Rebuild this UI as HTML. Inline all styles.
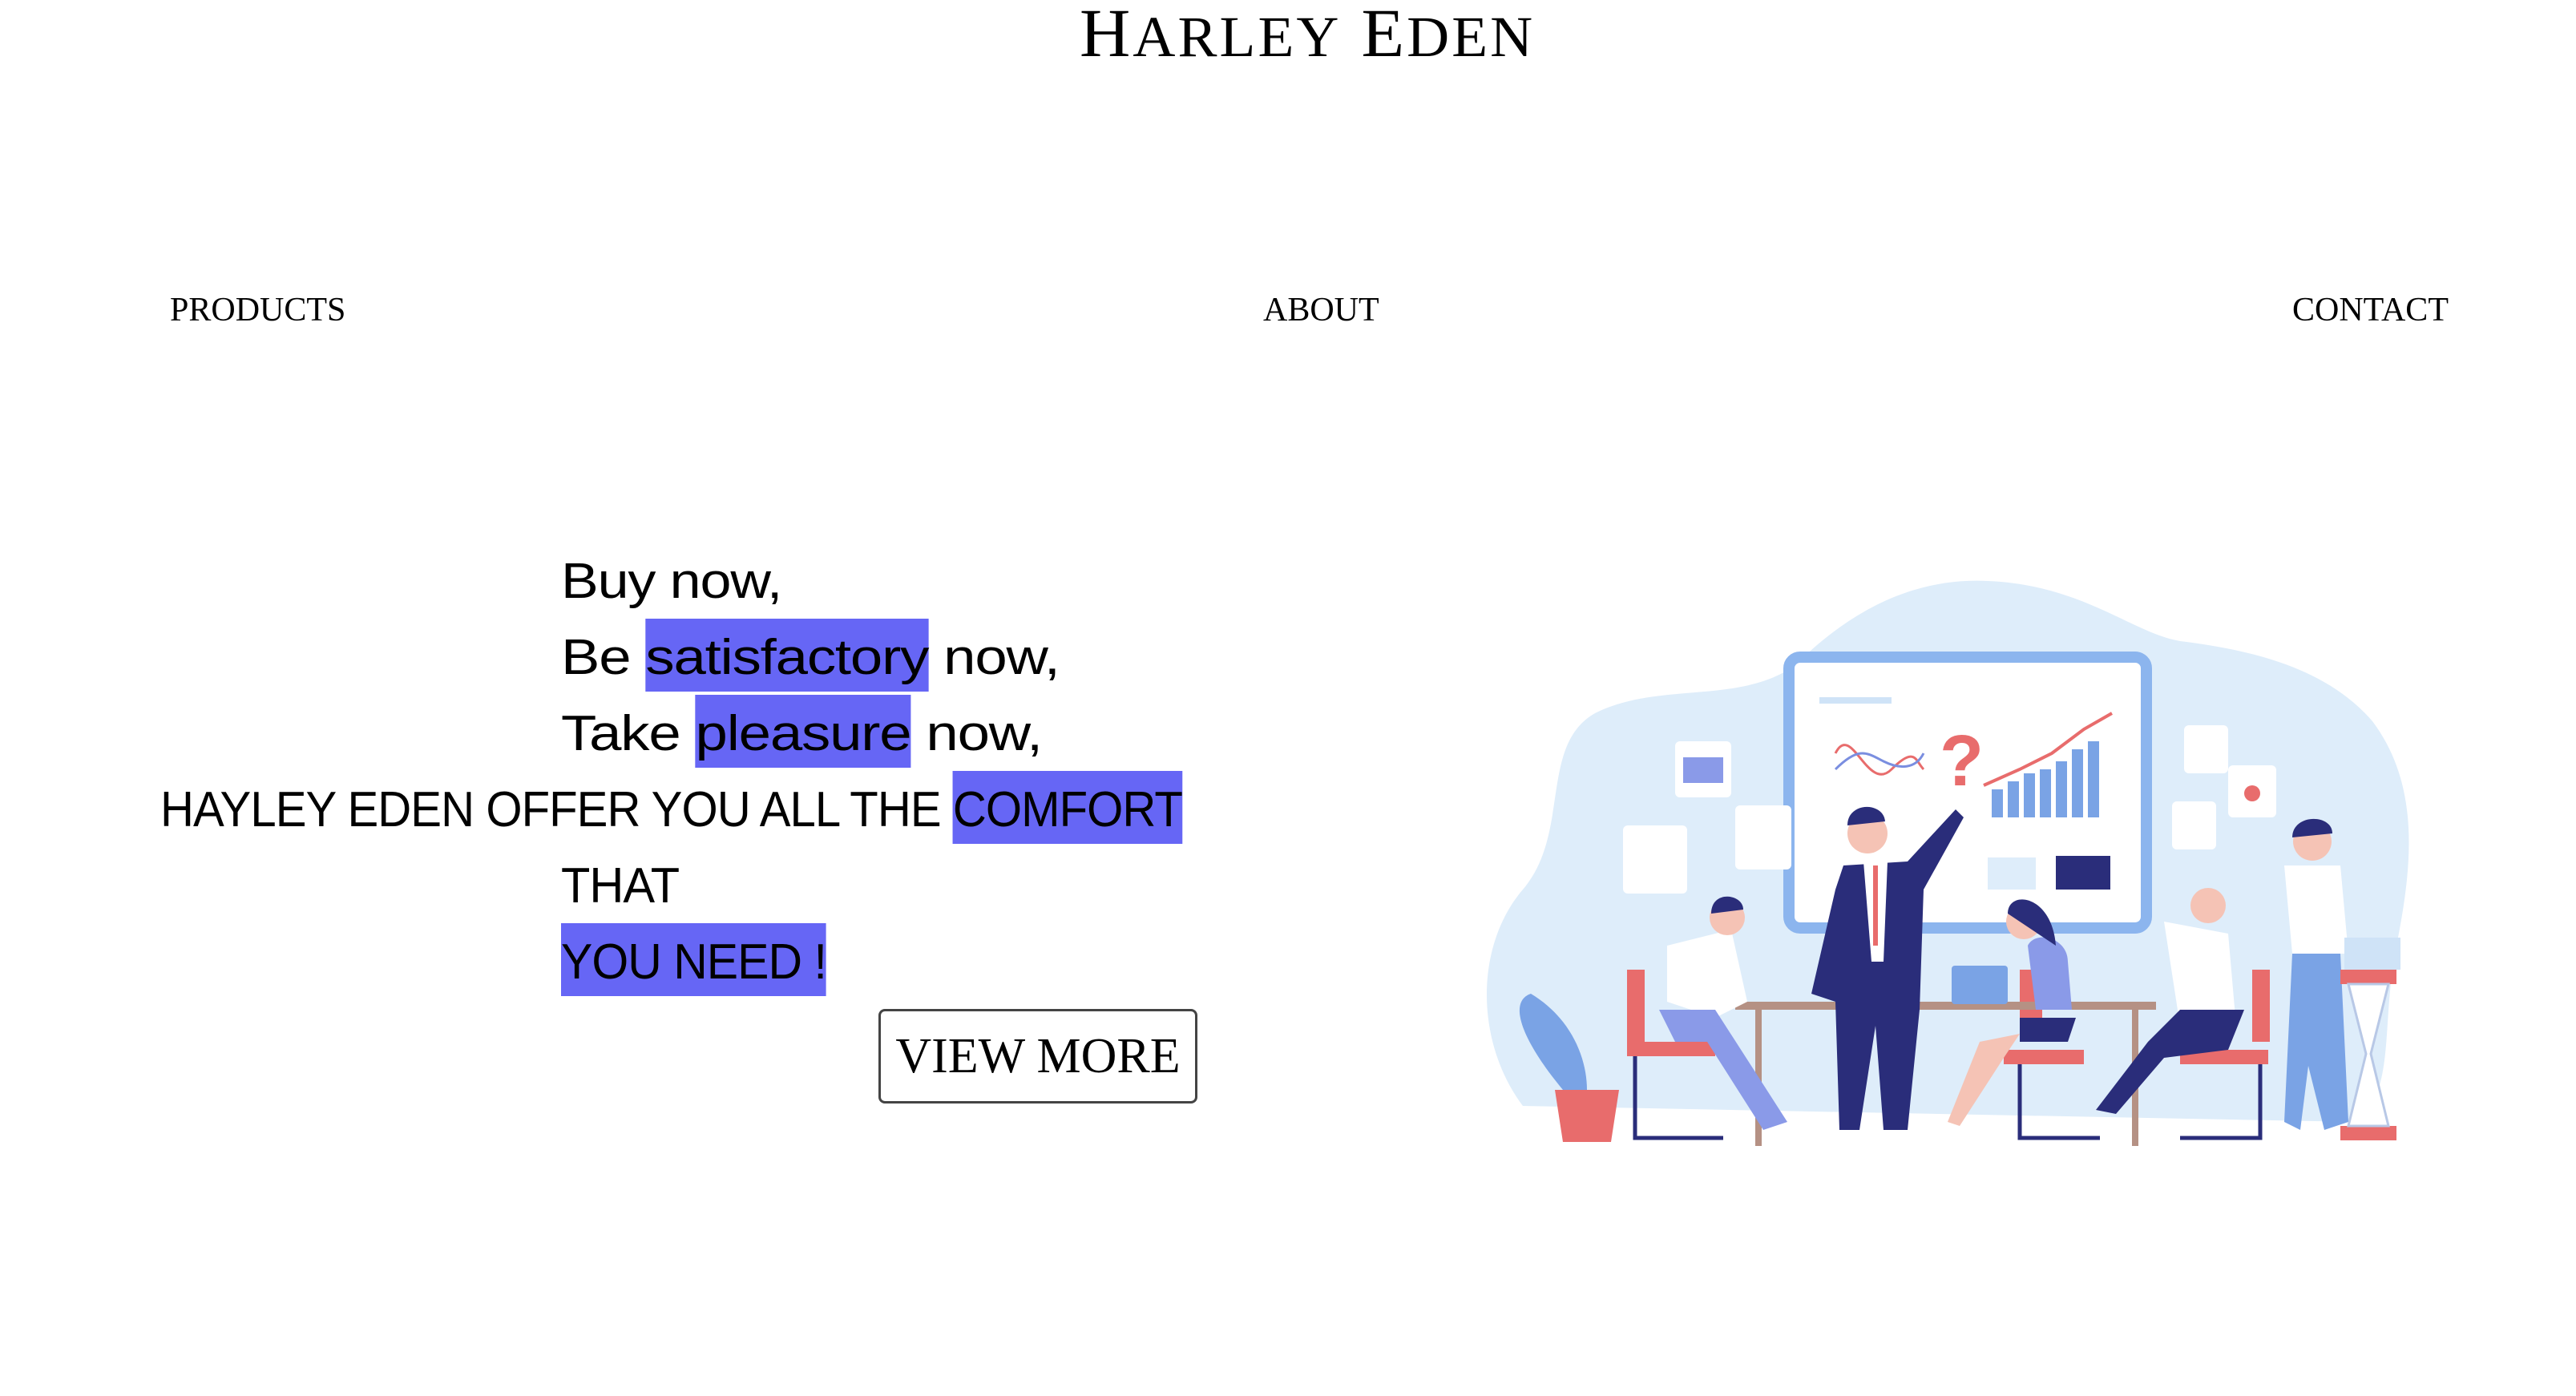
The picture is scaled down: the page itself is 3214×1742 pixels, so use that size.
<!DOCTYPE html>
<html><head><meta charset="utf-8"><style>
html,body{margin:0;padding:0;background:#fff;}
body{width:3214px;height:1742px;position:relative;overflow:hidden;font-family:"Liberation Sans",sans-serif;color:#000;}
.title{position:absolute;top:-4px;left:1347px;font-family:"Liberation Serif",serif;font-size:86px;letter-spacing:3px;line-height:90px;white-space:nowrap;transform:scaleX(1.02);transform-origin:left;}
.title small{font-size:72px;}
.nav{position:absolute;top:362px;font-family:"Liberation Serif",serif;font-size:42px;line-height:50px;}
.l{position:absolute;font-size:62px;line-height:88px;white-space:nowrap;letter-spacing:-1px;transform-origin:left;}
.h{background:#6666f5;padding:14px 0 8px;}
.btn{position:absolute;left:1096px;top:1259px;width:392px;height:112px;border:3px solid #444;border-radius:8px;font-family:"Liberation Serif",serif;font-size:62px;line-height:112px;text-align:center;}
svg{position:absolute;left:0;top:0;}
</style></head><body>
<div class="title">H<small>ARLEY</small> E<small>DEN</small></div>
<div class="nav" style="left:212px">PRODUCTS</div>
<div class="nav" style="left:1576px">ABOUT</div>
<div class="nav" style="left:2860px">CONTACT</div>

<div class="l" style="left:700px;top:682px;transform:scaleX(1.13)">Buy now,</div>
<div class="l" style="left:700px;top:777px;transform:scaleX(1.17)">Be <span class="h">satisfactory</span> now,</div>
<div class="l" style="left:700px;top:872px;transform:scaleX(1.17)">Take <span class="h">pleasure</span> now,</div>
<div class="l" style="left:200px;top:967px;transform:scaleX(0.937)">HAYLEY EDEN OFFER YOU ALL THE <span class="h">COMFORT</span></div>
<div class="l" style="left:700px;top:1062px;transform:scaleX(0.96)">THAT</div>
<div class="l" style="left:700px;top:1157px;transform:scaleX(0.95)"><span class="h">YOU NEED !</span></div>
<div class="btn">VIEW MORE</div>

<svg width="3214" height="1742" viewBox="0 0 3214 1742">
<path d="M1900 1380 C1840 1300 1840 1180 1900 1110 C1960 1040 1920 930 1990 890 C2070 850 2170 880 2240 830 C2300 770 2380 720 2480 725 C2600 730 2660 790 2720 800 C2800 810 2900 830 2960 900 C3020 980 3010 1080 2990 1180 C2970 1280 2990 1360 2940 1400 Z" fill="#deedfa"/>
<rect x="2232" y="820" width="446" height="338" rx="14" fill="#fff" stroke="#8cb5ee" stroke-width="14"/>
<rect x="2270" y="870" width="90" height="8" fill="#cfe3f7"/>
<path d="M2290 940 C2310 900 2330 990 2360 960 S2390 950 2400 960" stroke="#e86c6c" stroke-width="3" fill="none"/>
<path d="M2290 960 C2320 930 2330 940 2350 950 S2390 960 2400 940" stroke="#7a8ee0" stroke-width="3" fill="none"/>
<text x="2420" y="980" font-family="Liberation Sans,sans-serif" font-size="90" font-weight="bold" fill="#e86c6c">?</text>
<g fill="#7aa3e5"><rect x="2485" y="985" width="14" height="35"/><rect x="2505" y="975" width="14" height="45"/><rect x="2525" y="965" width="14" height="55"/><rect x="2545" y="960" width="14" height="60"/><rect x="2565" y="950" width="14" height="70"/><rect x="2585" y="935" width="14" height="85"/><rect x="2605" y="925" width="14" height="95"/></g>
<path d="M2475 980 L2520 960 L2560 940 L2600 910 L2635 890" stroke="#e86c6c" stroke-width="4" fill="none"/>
<rect x="2480" y="1070" width="60" height="40" fill="#deedfa"/>
<rect x="2565" y="1068" width="68" height="42" fill="#2a2d7a"/>
<rect x="2090" y="925" width="70" height="70" rx="6" fill="#fff"/><rect x="2100" y="945" width="50" height="32" fill="#8a9ae8"/>
<rect x="2025" y="1030" width="80" height="85" rx="6" fill="#fff"/>
<rect x="2165" y="1005" width="70" height="80" rx="6" fill="#fff"/>
<rect x="2725" y="905" width="55" height="60" rx="6" fill="#fff"/>
<rect x="2780" y="955" width="60" height="65" rx="6" fill="#fff"/><circle cx="2810" cy="990" r="10" fill="#e86c6c"/>
<rect x="2710" y="1000" width="55" height="60" rx="6" fill="#fff"/>
<g fill="#e86c6c"><rect x="2030" y="1210" width="22" height="90"/><rect x="2030" y="1300" width="110" height="18"/><rect x="2520" y="1210" width="28" height="90"/><rect x="2500" y="1310" width="100" height="18"/><rect x="2810" y="1210" width="22" height="90"/><rect x="2720" y="1310" width="110" height="18"/></g>
<g stroke="#2a2d7a" stroke-width="5" fill="none"><path d="M2040 1318 V1420 H2150"/><path d="M2520 1328 V1420 H2620"/><path d="M2820 1328 V1420 H2720"/></g>
<path d="M1950 1360 C1900 1300 1880 1250 1910 1240 C1960 1270 1980 1320 1980 1360 Z" fill="#7aa3e5"/>
<path d="M1940 1360 L2020 1360 L2010 1425 L1950 1425 Z" fill="#e86c6c"/>
<rect x="2165" y="1250" width="525" height="10" fill="#b59184"/>
<rect x="2190" y="1260" width="8" height="170" fill="#b59184"/><rect x="2660" y="1260" width="8" height="170" fill="#b59184"/>
<rect x="2435" y="1205" width="70" height="48" rx="4" fill="#7aa3e5"/>
<path d="M2300 1080 L2380 1075 L2440 1010 L2450 1020 L2400 1110 L2395 1260 L2380 1410 L2350 1410 L2340 1280 L2320 1410 L2295 1410 L2290 1250 L2260 1240 L2290 1110 Z" fill="#2a2d7a"/>
<path d="M2325 1075 L2355 1075 L2350 1200 L2335 1200 Z" fill="#fff"/><rect x="2337" y="1080" width="6" height="100" fill="#e86c6c"/>
<circle cx="2330" cy="1040" r="25" fill="#f5c3b5"/><path d="M2305 1030 C2305 1000 2350 1000 2352 1025 Z" fill="#2a2d7a"/>
<path d="M2080 1180 L2160 1160 L2180 1250 L2140 1270 L2080 1250 Z" fill="#fff"/>
<path d="M2070 1260 L2140 1260 L2230 1400 L2200 1410 L2130 1300 L2090 1300 Z" fill="#8a9ae8"/>
<circle cx="2155" cy="1145" r="22" fill="#f5c3b5"/><path d="M2135 1140 C2135 1110 2175 1115 2175 1135 Z" fill="#2a2d7a"/>
<path d="M2530 1180 C2540 1160 2580 1170 2580 1200 L2585 1260 L2540 1260 Z" fill="#8a9ae8"/>
<path d="M2520 1270 L2590 1270 L2580 1300 L2520 1300 Z" fill="#2a2d7a"/>
<path d="M2520 1290 L2470 1300 L2430 1400 L2445 1405 L2500 1320 Z" fill="#f5c3b5"/>
<circle cx="2525" cy="1150" r="22" fill="#f5c3b5"/><path d="M2505 1140 C2505 1110 2560 1115 2565 1180 Z" fill="#2a2d7a"/>
<path d="M2700 1150 L2780 1165 L2790 1280 L2720 1280 Z" fill="#fff"/>
<path d="M2720 1260 L2800 1260 L2780 1310 L2700 1320 L2640 1390 L2615 1385 L2680 1300 Z" fill="#2a2d7a"/>
<circle cx="2755" cy="1130" r="22" fill="#f5c3b5"/>
<path d="M2850 1080 L2920 1080 L2930 1190 L2860 1190 Z" fill="#fff"/>
<path d="M2860 1190 L2920 1190 L2930 1400 L2900 1410 L2880 1330 L2870 1410 L2850 1400 Z" fill="#7aa3e5"/>
<circle cx="2885" cy="1050" r="24" fill="#f5c3b5"/><path d="M2860 1045 C2860 1015 2910 1015 2910 1040 Z" fill="#2a2d7a"/>
<rect x="2920" y="1210" width="70" height="18" fill="#e86c6c"/><rect x="2920" y="1405" width="70" height="18" fill="#e86c6c"/>
<path d="M2930 1228 L2980 1228 L2958 1315 L2980 1405 L2930 1405 L2952 1315 Z" fill="#fff" stroke="#b8c8e6" stroke-width="3"/>
<rect x="2925" y="1170" width="70" height="40" fill="#cfe3f7"/>
</svg>
</body></html>
